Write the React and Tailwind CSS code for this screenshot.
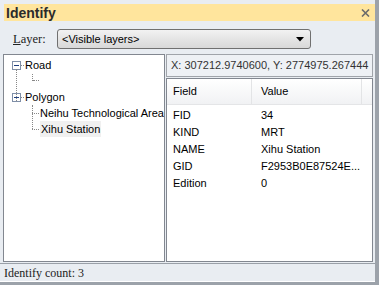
import React from "react";

const sans = { fontFamily: '"Liberation Sans", Arial, sans-serif' };
const serif = { fontFamily: '"Liberation Serif", "Times New Roman", serif' };

function Minus() {
  return (
    <span className="inline-flex w-[9px] h-[9px] border border-[#7f8fa8] bg-white items-center justify-center shrink-0">
      <span className="block w-[5px] h-[1px] bg-[#1f3f7f]" />
    </span>
  );
}

const rows = [
  ["FID", "34"],
  ["KIND", "MRT"],
  ["NAME", "Xihu Station"],
  ["GID", "F2953B0E87524E..."],
  ["Edition", "0"],
];

export default function App() {
  return (
    <div
      className="w-[379px] h-[285px] bg-[#e9edf2] border-r-[4px] border-b-[3px] border-[#9ca2aa] flex flex-col overflow-hidden text-[11px] text-black"
      style={sans}
    >
      <div className="mt-[4px] ml-[4px] h-[17px] bg-[#ffe59d] flex items-center justify-between pl-[2px] pr-[5px]">
        <span className="text-[14px] font-bold text-[#2b2b2b] leading-none">Identify</span>
        <svg width="9" height="8" viewBox="0 0 9 8" className="mt-[1px]">
          <path d="M1 0.5 L8 7.5 M8 0.5 L1 7.5" stroke="#6b6b6b" strokeWidth="1.6" />
        </svg>
      </div>

      <div className="mt-[8px] h-[20px] flex items-center">
        <span className="ml-[13px] w-[44px] text-[12.5px] text-[#222]" style={serif}>
          <span className="underline">L</span>ayer:
        </span>
        <div className="w-[254px] h-[20px] rounded-[3px] border border-[#707070] bg-gradient-to-b from-[#f2f2f2] to-[#d8d8d8] flex items-center justify-between pl-[4px] pr-[6px]">
          <span className="text-[11px]">&lt;Visible layers&gt;</span>
          <svg width="8" height="5" viewBox="0 0 8 5">
            <path d="M0 0 H8 L4 4.5 Z" fill="#000" />
          </svg>
        </div>
      </div>

      <div className="mt-[5px] h-[208px] flex pl-[3px]">
        <div className="w-[162px] h-full border border-[#828790] bg-white pt-[2px] pl-[8px] whitespace-nowrap overflow-hidden">
          <div className="relative">
            <div className="absolute left-[4px] top-[12px] h-[32px] border-l border-dotted border-[#888]" />
            <div className="h-[16px] flex items-center">
              <Minus />
              <span className="w-[3px] border-t border-dotted border-[#888]" />
              <span className="ml-[1px]">Road</span>
            </div>
            <div className="h-[16px] flex items-start pl-[20px]">
              <span className="mt-[1px] w-[1px] h-[7px] border-l border-dotted border-[#888]" />
              <span className="mt-[7px] w-[6px] border-t border-dotted border-[#888]" />
            </div>
            <div className="h-[16px] flex items-center">
              <Minus />
              <span className="w-[3px] border-t border-dotted border-[#888]" />
              <span className="ml-[1px]">Polygon</span>
            </div>
            <div className="relative">
              <div className="absolute left-[20px] top-0 h-[24px] border-l border-dotted border-[#888]" />
              <div className="h-[16px] flex items-center pl-[20px]">
                <span className="w-[7px] border-t border-dotted border-[#888]" />
                <span className="ml-[1px]">Neihu Technological Area</span>
              </div>
              <div className="h-[16px] flex items-center pl-[20px]">
                <span className="w-[7px] border-t border-dotted border-[#888]" />
                <span className="ml-[1px] px-[1px] bg-[#f0f0f0]">Xihu Station</span>
              </div>
            </div>
          </div>
        </div>

        <div className="ml-[1px] w-[207px] h-full flex flex-col">
          <div className="h-[23px] border border-[#a0a4aa] bg-[#eef1f5] flex items-center pl-[4px] text-[11px] text-[#333] whitespace-nowrap overflow-hidden">
            X: 307212.9740600, Y: 2774975.267444
          </div>
          <div className="mt-[1px] flex-1 border border-[#828790] bg-white">
            <div className="h-[26px] flex bg-gradient-to-b from-white to-[#f1f2f4] border-b border-[#e4e5e7]">
              <div className="w-[85px] flex items-center pl-[6px] border-r border-[#e3e4e6]">Field</div>
              <div className="w-[110px] flex items-center pl-[9px] border-r border-[#e3e4e6]">Value</div>
              <div className="flex-1" />
            </div>
            <div className="pt-[2px]">
              {rows.map(([f, v]) => (
                <div key={f} className="h-[17px] flex items-center">
                  <span className="w-[85px] pl-[6px]">{f}</span>
                  <span className="pl-[9px]">{v}</span>
                </div>
              ))}
            </div>
          </div>
        </div>
      </div>

      <div className="mt-[1px] h-[19px] border-t border-[#9aa0a8] border-b border-b-white flex items-center pl-[4px] text-[12px] text-[#222]" style={serif}>
        Identify count: 3
      </div>
    </div>
  );
}
